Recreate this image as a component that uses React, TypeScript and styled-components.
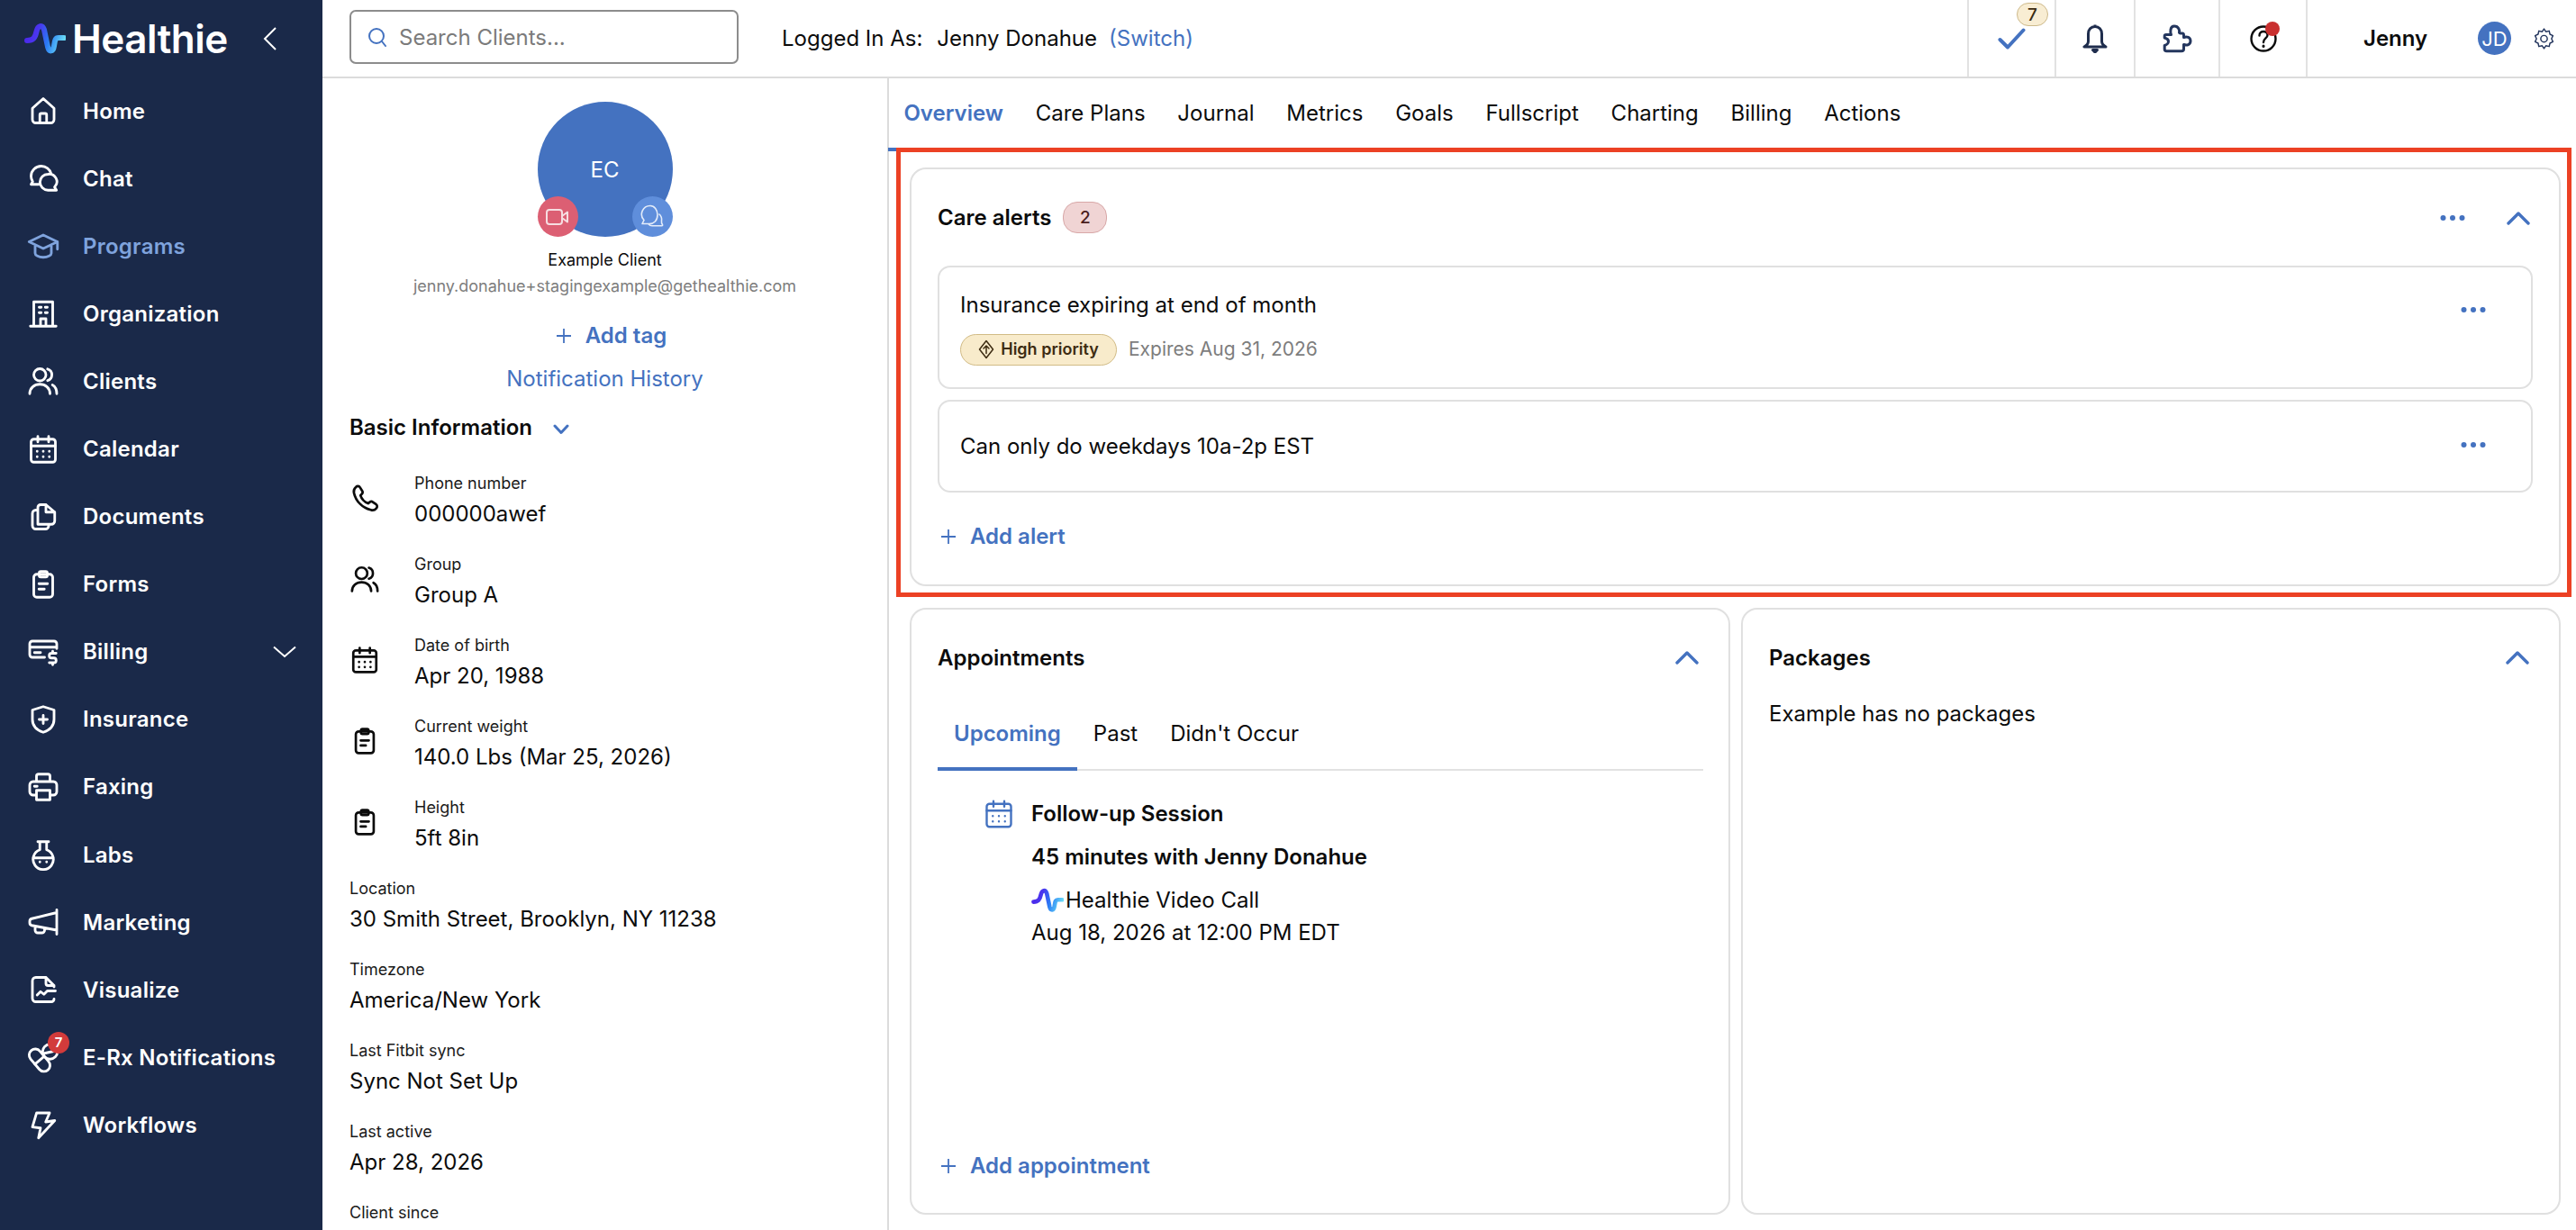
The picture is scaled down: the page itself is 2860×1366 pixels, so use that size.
import React from 'react';
import styled, { createGlobalStyle } from 'styled-components';

const BLUE = '#4472c0';
const NAVY = '#1a2949';

const GlobalStyle = createGlobalStyle`
	html, body {
		margin: 0;
		padding: 0;
		background: #fff;
		font-family: Inter, "Noto Sans", sans-serif;
		color: #0c0c0c;
	}
	* {
		box-sizing: border-box;
	}
`;

const Page = styled.div`
	display: flex;
	width: 2860px;
	height: 1366px;
	overflow: hidden;
`;

const Sidebar = styled.nav`
	width: 358px;
	flex: none;
	background: ${NAVY};
	color: #fff;
`;

const Brand = styled.div`
	height: 85.5px;
	display: flex;
	align-items: center;
	padding-left: 27px;
	position: relative;
`;

const BrandName = styled.span`
	font-size: 44px;
	font-weight: 600;
	letter-spacing: -0.5px;
	margin-left: 7px;
	line-height: 1;
`;

const Collapse = styled.svg`
	margin-left: 38px;
	width: 18px;
	height: 28px;
`;

const NavItem = styled.div<{ $active?: boolean }>`
	height: 75.1px;
	display: flex;
	align-items: center;
	padding-left: 30px;
	font-size: 24px;
	font-weight: 600;
	letter-spacing: 0.25px;
	position: relative;
	color: ${(p) => (p.$active ? '#7fa3dd' : '#fff')};
`;

const NavIcon = styled.svg`
	width: 36px;
	height: 36px;
	flex: none;
	margin-right: 26px;
	fill: none;
	stroke: currentColor;
	stroke-width: 1.9;
	stroke-linecap: round;
	stroke-linejoin: round;
`;

const NavChevron = styled.svg`
	position: absolute;
	left: 303px;
	width: 26px;
	height: 14px;
`;

const NavBadge = styled.span`
	position: absolute;
	left: 53px;
	top: 9px;
	width: 24px;
	height: 24px;
	border-radius: 50%;
	background: #d23b3b;
	color: #fff;
	font-size: 15px;
	font-weight: 600;
	letter-spacing: 0;
	display: flex;
	align-items: center;
	justify-content: center;
`;

const Main = styled.div`
	flex: 1;
	min-width: 0;
	display: flex;
	flex-direction: column;
`;

const Topbar = styled.header`
	height: 87px;
	flex: none;
	border-bottom: 2px solid #dcdcdc;
	display: flex;
	align-items: stretch;
	padding-left: 30px;
	font-size: 24px;
`;

const SearchBox = styled.div`
	width: 432px;
	height: 60px;
	margin-top: 11px;
	border: 2px solid #8c8c8c;
	border-radius: 7px;
	display: flex;
	align-items: center;
	padding-left: 19px;
	color: #7b7b7b;
	font-size: 24px;
	gap: 14px;
`;

const LoggedIn = styled.div`
	display: flex;
	align-items: center;
	margin-left: 48px;
	flex: 1;
	letter-spacing: 0;
`;

const LoggedLabel = styled.span`
	margin-right: 16px;
`;

const SwitchLink = styled.span`
	color: ${BLUE};
	margin-left: 13px;
`;

const TopCell = styled.div<{ $width: number }>`
	width: ${(p) => p.$width}px;
	flex: none;
	border-left: 2px solid #e2e2e2;
	display: flex;
	align-items: center;
	justify-content: center;
	position: relative;
	color: #1f2d4d;
`;

const CheckBadge = styled.span`
	position: absolute;
	left: 53px;
	top: 3px;
	width: 35px;
	height: 26px;
	border-radius: 13px;
	background: #f8edd3;
	border: 1px solid #cdb98a;
	color: #3c2a10;
	font-size: 19px;
	font-weight: 500;
	display: flex;
	align-items: center;
	justify-content: center;
`;

const HelpDot = styled.span`
	position: absolute;
	left: 50px;
	top: 24px;
	width: 16px;
	height: 16px;
	border-radius: 50%;
	background: #c9302f;
`;

const UserCell = styled.div`
	flex: none;
	width: 300px;
	border-left: 2px solid #e2e2e2;
	display: flex;
	align-items: center;
	padding-left: 62px;
`;

const UserName = styled.span`
	font-weight: 600;
	width: 127px;
`;

const UserAvatar = styled.div`
	width: 37px;
	height: 37px;
	border-radius: 50%;
	background: ${BLUE};
	color: #fff;
	font-size: 22px;
	display: flex;
	align-items: center;
	justify-content: center;
	margin-right: 24px;
`;

const Body = styled.div`
	flex: 1;
	min-height: 0;
	display: flex;
`;

const LeftPanel = styled.aside`
	width: 629px;
	flex: none;
	border-right: 2px solid #dcdcdc;
	padding: 26px 30px 0;
	overflow: hidden;
`;

const AvatarWrap = styled.div`
	position: relative;
	width: 150px;
	height: 150px;
	margin: 0 auto;
	border-radius: 50%;
	background: ${BLUE};
	color: #fff;
	font-size: 24px;
	display: flex;
	align-items: center;
	justify-content: center;
`;

const AvatarAction = styled.span<{ $side: 'left' | 'right'; $bg: string }>`
	position: absolute;
	bottom: 0;
	${(p) => p.$side}: 0;
	width: 45px;
	height: 45px;
	border-radius: 50%;
	background: ${(p) => p.$bg};
	display: flex;
	align-items: center;
	justify-content: center;
`;

const ClientName = styled.div`
	margin-top: 13px;
	text-align: center;
	font-size: 18px;
	line-height: 26px;
`;

const ClientEmail = styled.div`
	margin-top: 3px;
	text-align: center;
	font-size: 18px;
	line-height: 26px;
	color: #7d7d7d;
	white-space: nowrap;
`;

const AddLink = styled.div<{ $center?: boolean }>`
	display: flex;
	align-items: center;
	justify-content: ${(p) => (p.$center ? 'center' : 'flex-start')};
	color: ${BLUE};
	font-size: 24px;
	font-weight: 600;
	line-height: 36px;
`;

const AddIcon = styled.svg`
	width: 16px;
	height: 16px;
	margin: 0 16px 0 0;
	stroke: ${BLUE};
	stroke-width: 1.8;
	fill: none;
`;

const TagRow = styled(AddLink)`
	margin-top: 24px;
	padding-left: 15px;
`;

const HistoryLink = styled.div`
	margin-top: 12px;
	text-align: center;
	font-size: 24px;
	line-height: 36px;
	color: ${BLUE};
`;

const SectionToggle = styled.div`
	margin-top: 18px;
	display: flex;
	align-items: center;
	font-size: 24px;
	font-weight: 600;
	line-height: 36px;
`;

const SmallChevron = styled.svg`
	width: 18px;
	height: 12px;
	margin-left: 23px;
	margin-top: 3px;
`;

const FieldList = styled.div`
	margin-top: 29px;
`;

const Field = styled.div`
	height: 90px;
	display: flex;
`;

const FieldIcon = styled.svg`
	width: 34px;
	height: 34px;
	flex: none;
	margin: 14px 38px 0 0;
	fill: none;
	stroke: #0c0c0c;
	stroke-width: 1.9;
	stroke-linecap: round;
	stroke-linejoin: round;
`;

const FieldLabel = styled.div`
	font-size: 18px;
	line-height: 30px;
	color: #1a1a1a;
`;

const FieldValue = styled.div`
	font-size: 24px;
	line-height: 36px;
	padding-top: 1px;
`;

const Content = styled.section`
	flex: 1;
	min-width: 0;
	position: relative;
`;

const TabBar = styled.div`
	height: 81px;
	display: flex;
	margin-left: -1.5px;
`;

const PageTab = styled.div<{ $active?: boolean }>`
	padding: 0 17.9px;
	display: flex;
	align-items: center;
	font-size: 24px;
	font-weight: ${(p) => (p.$active ? 600 : 400)};
	color: ${(p) => (p.$active ? BLUE : '#0c0c0c')};
	border-bottom: 4px solid ${(p) => (p.$active ? BLUE : 'transparent')};
`;

const Cards = styled.div`
	padding: 18px 17px 0 23px;
	display: flex;
	flex-direction: column;
	gap: 24px;
`;

const Card = styled.div`
	border: 2px solid #e0e0e0;
	border-radius: 18px;
	background: #fff;
`;

const AlertsCard = styled(Card)`
	height: 465px;
	padding: 0 29px;
`;

const CardRow = styled.div`
	display: grid;
	grid-template-columns: 911px 910px;
	column-gap: 12px;
	height: 674px;
`;

const ColumnCard = styled(Card)`
	padding: 0 29px;
	display: flex;
	flex-direction: column;
`;

const CardHeader = styled.div<{ $height: number }>`
	height: ${(p) => p.$height}px;
	flex: none;
	display: flex;
	align-items: center;
`;

const CardTitle = styled.div`
	font-size: 24px;
	font-weight: 600;
`;

const CountBadge = styled.span`
	width: 49px;
	height: 35px;
	margin-left: 13px;
	border-radius: 16px;
	background: #f0d4d4;
	border: 1px solid #d8a8a8;
	color: #4a1c1c;
	font-size: 19px;
	font-weight: 500;
	display: flex;
	align-items: center;
	justify-content: center;
`;

const HeaderSpacer = styled.div`
	flex: 1;
`;

const Dots = styled.svg`
	width: 28px;
	height: 8px;
`;

const Caret = styled.svg`
	width: 26px;
	height: 16px;
	margin: 0 3px 0 46px;
`;

const CaretOnly = styled(Caret)`
	margin-left: 0;
	margin-right: 4px;
`;

const AlertStack = styled.div`
	display: flex;
	flex-direction: column;
	gap: 12px;
`;

const AlertItem = styled.div<{ $height: number }>`
	height: ${(p) => p.$height}px;
	border: 2px solid #e0e0e0;
	border-radius: 14px;
	padding: 0 50px 0 23px;
	display: flex;
	align-items: center;
`;

const AlertBody = styled.div`
	flex: 1;
	font-size: 24px;
	line-height: 36px;
`;

const AlertMeta = styled.div`
	display: flex;
	align-items: center;
	margin-top: 13px;
`;

const Priority = styled.span`
	width: 174px;
	height: 35px;
	border-radius: 18px;
	background: #f8ebcb;
	border: 1px solid #d1bb86;
	color: #3d2c12;
	font-size: 18px;
	font-weight: 600;
	display: flex;
	align-items: center;
	justify-content: center;
	gap: 7px;
`;

const Expires = styled.span`
	margin-left: 13px;
	font-size: 21px;
	color: #7d7d7d;
`;

const AlertDotsOffset = styled.div<{ $up: number }>`
	display: flex;
	margin-top: ${(p) => -p.$up}px;
`;

const AddAlertRow = styled(AddLink)`
	margin-top: 31px;
	padding-left: 4px;
`;

const SubTabs = styled.div`
	height: 73px;
	flex: none;
	border-bottom: 2px solid #e2e2e2;
	display: flex;
	align-items: stretch;
	margin-right: -1px;
`;

const SubTab = styled.div<{ $active?: boolean }>`
	padding: 0 18px 7px;
	margin-bottom: -2px;
	display: flex;
	align-items: center;
	font-size: 24px;
	font-weight: ${(p) => (p.$active ? 600 : 400)};
	color: ${(p) => (p.$active ? BLUE : '#0c0c0c')};
	border-bottom: 4px solid ${(p) => (p.$active ? BLUE : 'transparent')};
`;

const Session = styled.div`
	display: flex;
	padding: 30px 0 0 50px;
	flex: 1;
`;

const SessionIcon = styled.svg`
	width: 36px;
	height: 36px;
	flex: none;
	margin-right: 18px;
	fill: none;
	stroke: ${BLUE};
	stroke-width: 1.6;
	stroke-linecap: round;
	stroke-linejoin: round;
`;

const SessionStrong = styled.div`
	font-size: 24px;
	font-weight: 600;
	line-height: 36px;
	margin-bottom: 12px;
`;

const SessionLine = styled.div`
	font-size: 24px;
	line-height: 36px;
	display: flex;
	align-items: center;
	gap: 2px;
`;

const AddAppointment = styled(AddLink)`
	height: 36px;
	padding-left: 4px;
	margin-bottom: 34px;
`;

const PackagesNote = styled.div`
	font-size: 24px;
	line-height: 36px;
	margin-top: -8px;
`;

const Highlight = styled.div`
	position: absolute;
	left: 8px;
	top: 77px;
	width: 1860px;
	height: 499px;
	border: 5px solid #ec4124;
	pointer-events: none;
`;

const Wave: React.FC<{ width: number; height: number; id: string }> = ({ width, height, id }) => (
	<svg width={width} height={height} viewBox="0 0 46 36" fill="none" style={{ flex: 'none' }}>
		<defs>
			<linearGradient id={id} x1="0" y1="0" x2="46" y2="16" gradientUnits="userSpaceOnUse">
				<stop offset="0" stopColor="#4d1fe8" />
				<stop offset="0.35" stopColor="#4a35ee" />
				<stop offset="0.65" stopColor="#2a7cf5" />
				<stop offset="1" stopColor="#6adcf6" />
			</linearGradient>
		</defs>
		<path
			d="M3 20C10 20 12 17 13.500 10 15 3 20 2 22 8L26 27C27.500 33 32 33 33 26 34 20 34 17 38 17H44"
			stroke={`url(#${id})`}
			strokeWidth="6"
			strokeLinecap="round"
			strokeLinejoin="round"
		/>
	</svg>
);

const CLIPBOARD = (
	<>
		<rect x="5" y="4.5" width="14" height="17" rx="2.2" />
		<rect x="9" y="2.5" width="6" height="4" rx="1.2" />
		<path d="M8.8 11.5h6.4M8.8 15.5h4" />
	</>
);

const CALENDAR = (
	<>
		<rect x="3" y="4.5" width="18" height="17" rx="2" />
		<path d="M3 9.5h18M8 2.5v4M16 2.5v4" />
		<path d="M7.5 13.5h.01M12 13.5h.01M16.5 13.5h.01M7.5 17.5h.01M12 17.5h.01M16.5 17.5h.01" />
	</>
);

const USERS = (
	<>
		<circle cx="9.5" cy="7.5" r="4.5" />
		<path d="M2 21.5c0-4.3 3.4-7 7.5-7s7.5 2.7 7.5 7" />
		<path d="M15.2 3.2a4.5 4.5 0 0 1 0 8.6M18.8 15c2 1.1 3.2 3.4 3.2 6.5" />
	</>
);

interface NavEntry {
	label: string;
	icon: React.ReactNode;
	active?: boolean;
	chevron?: boolean;
	badge?: string;
}

const NAV: NavEntry[] = [
	{ label: 'Home', icon: <path d="M9.5 21v-6a1 1 0 0 1 1-1h3a1 1 0 0 1 1 1v6M4 10.2 12 3l8 7.2v8.3a2.5 2.5 0 0 1-2.5 2.5h-11A2.5 2.5 0 0 1 4 18.5z" /> },
	{
		label: 'Chat',
		icon: (
			<path d="M8.5 16.5H3l1.2-2A7.2 7.2 0 0 1 3 10.3C3 6.3 6.4 3 10.5 3c3.500 0 6.500 2.300 7.300 5.500M15.500 9a5.500 5.500 0 1 0 0 11.800h6.300l-1.400-2.300A5.600 5.600 0 0 0 15.500 9z" />
		),
	},
	{
		label: 'Programs',
		icon: <path d="M1.500 9 12 4l10.500 5L12 14zM6 11.500v6c0 1.500 2.500 3 6 3s6-1.500 6-3v-6M22.500 9v5.500" />,
		active: true,
	},
	{ label: 'Organization', icon: <path d="M2.500 21.500h19M5 21.500v-18h14v18M9 7.500h1.500M13.500 7.500H15M9 11.500h1.500M13.500 11.500H15M10 21.500v-5.500h4v5.500" /> },
	{ label: 'Clients', icon: USERS },
	{ label: 'Calendar', icon: CALENDAR },
	{
		label: 'Documents',
		icon: (
			<path d="M8 7H6.500A2.500 2.500 0 0 0 4 9.500v9A2.500 2.500 0 0 0 6.500 21h7a2.500 2.500 0 0 0 2.500-2v-1M8 17.500V5a2 2 0 0 1 2-2h4l6.500 5.500V15a2.500 2.500 0 0 1-2.500 2.500zM14 3v5.500h6.500" />
		),
	},
	{ label: 'Forms', icon: CLIPBOARD },
	{
		label: 'Billing',
		icon: (
			<path d="M22 9.500V6a2 2 0 0 0-2-2H4a2 2 0 0 0-2 2v8a2 2 0 0 0 2 2h9M2 8.500h20M5.500 12.500H10M21.500 13h-3.300a1.700 1.700 0 0 0 0 3.500h1.600a1.700 1.700 0 0 1 0 3.500h-3.300M19 11.500v1.500M19 20v1.500" />
		),
		chevron: true,
	},
	{ label: 'Insurance', icon: <path d="M12 2.500 20 5v7c0 5-3.500 8-8 9.500C7.500 20 4 17 4 12V5zM12 9v6M9 12h6" /> },
	{
		label: 'Faxing',
		icon: (
			<path d="M7 8V4a1.500 1.500 0 0 1 1.500-1.500h7A1.500 1.500 0 0 1 17 4v4M7 18H4.500A2.500 2.500 0 0 1 2 15.500v-5A2.500 2.500 0 0 1 4.500 8h15a2.500 2.500 0 0 1 2.500 2.500v5a2.500 2.500 0 0 1-2.500 2.500H17M7 14.500h10V21.500H7zM5.500 11.500h2" />
		),
	},
	{
		label: 'Labs',
		icon: <path d="M8 2.500h8M9.500 2.500v6a7.500 7.500 0 1 0 5 0v-6M4.500 14.500h15M9.500 17.500h.01M14.500 17.500h.01" />,
	},
	{
		label: 'Marketing',
		icon: (
			<path d="M22 3v18M22 5 3.500 9.500A2 2 0 0 0 2 11.500v1a2 2 0 0 0 1.500 2L22 18M6 15.500v2.500a2 2 0 0 0 2 2h3a2 2 0 0 0 2-2v-1" />
		),
	},
	{
		label: 'Visualize',
		icon: (
			<path d="M20 10V9l-6-6H6.500A2.500 2.500 0 0 0 4 5.500v13A2.500 2.500 0 0 0 6.500 21H18a2 2 0 0 0 2-2M14 3v4.500a1.500 1.500 0 0 0 1.500 1.500H20M7.500 16l2.500-2.500 2.500 2 2.500-2.500H21" />
		),
	},
	{
		label: 'E-Rx Notifications',
		icon: (
			<>
				<g transform="translate(9.3 14.3) rotate(50)">
					<rect x="-9.500" y="-4.500" width="19" height="9" rx="4.500" />
					<path d="M0-4.500v9" />
				</g>
				<circle cx="17" cy="8" r="5.500" />
				<path d="M11.500 9.500l11-2.500" />
			</>
		),
		badge: '7',
	},
	{ label: 'Workflows', icon: <path d="M7.100 3.300h9.600L13.800 10l6.700-1L8.500 21.800 10 14.500l-6-.7z" /> },
];

const TABS = ['Overview', 'Care Plans', 'Journal', 'Metrics', 'Goals', 'Fullscript', 'Charting', 'Billing', 'Actions'];

const ICON_FIELDS: { label: string; value: string; icon: React.ReactNode }[] = [
	{
		label: 'Phone number',
		value: '000000awef',
		icon: (
			<path d="M5 3.500c1-1 2.500-1 3.300.3l1.700 2.700c.5.800.3 1.800-.4 2.500l-1 1c.8 2.500 3.200 5.200 6 6.300l1.300-1c.7-.500 1.700-.6 2.400-.1l2.400 1.700c1.200.8 1.300 2.300.3 3.300-1 1.200-2.700 1.800-4.300 1.200C10 19.500 5 14.500 3.500 8c-.4-1.700.3-3.400 1.500-4.500z" />
		),
	},
	{ label: 'Group', value: 'Group A', icon: USERS },
	{ label: 'Date of birth', value: 'Apr 20, 1988', icon: CALENDAR },
	{ label: 'Current weight', value: '140.0 Lbs (Mar 25, 2026)', icon: CLIPBOARD },
	{ label: 'Height', value: '5ft 8in', icon: CLIPBOARD },
];

const PLAIN_FIELDS = [
	{ label: 'Location', value: '30 Smith Street, Brooklyn, NY 11238' },
	{ label: 'Timezone', value: 'America/New York' },
	{ label: 'Last Fitbit sync', value: 'Sync Not Set Up' },
	{ label: 'Last active', value: 'Apr 28, 2026' },
	{ label: 'Client since', value: '' },
];

const DotsIcon = () => (
	<Dots viewBox="0 0 28 8" fill={BLUE}>
		<circle cx="3.500" cy="4" r="3" />
		<circle cx="14" cy="4" r="3" />
		<circle cx="24.500" cy="4" r="3" />
	</Dots>
);

const CaretPath = () => <path d="M2 14 13 3l11 11" stroke={BLUE} strokeWidth="3.400" fill="none" strokeLinecap="round" strokeLinejoin="round" />;

const Plus = () => (
	<AddIcon viewBox="0 0 16 16">
		<path d="M8 0v16M0 8h16" />
	</AddIcon>
);

const App: React.FC = () => {
	return (
		<Page>
			<GlobalStyle />
			<Sidebar>
				<Brand>
					<Wave width={46} height={36} id="brand-wave" />
					<BrandName>Healthie</BrandName>
					<Collapse viewBox="0 0 18 28" fill="none" stroke="#fff" strokeWidth="2">
						<path d="M15 2 3 14l12 12" />
					</Collapse>
				</Brand>
				{NAV.map((item) => (
					<NavItem key={item.label} $active={item.active}>
						<NavIcon viewBox="0 0 24 24">{item.icon}</NavIcon>
						{item.label}
						{item.badge && <NavBadge>{item.badge}</NavBadge>}
						{item.chevron && (
							<NavChevron viewBox="0 0 26 14" fill="none" stroke="#fff" strokeWidth="2">
								<path d="M1 1.500 13 12 25 1.500" />
							</NavChevron>
						)}
					</NavItem>
				))}
			</Sidebar>
			<Main>
				<Topbar>
					<SearchBox>
						<svg width="20" height="22" viewBox="0 0 20 22" fill="none" stroke={BLUE} strokeWidth="2">
							<circle cx="9" cy="10" r="8" />
							<path d="M15 16l4 5" strokeLinecap="round" />
						</svg>
						Search Clients...
					</SearchBox>
					<LoggedIn>
						<LoggedLabel>Logged In As:</LoggedLabel>
						Jenny Donahue
						<SwitchLink>(Switch)</SwitchLink>
					</LoggedIn>
					<TopCell $width={97}>
						<svg width="31" height="24" viewBox="0 0 31 24" fill="none" stroke={BLUE} strokeWidth="4" strokeLinecap="round" strokeLinejoin="round">
							<path d="M2.500 13 11 21.500 28.500 2.500" />
						</svg>
						<CheckBadge>7</CheckBadge>
					</TopCell>
					<TopCell $width={88}>
						<svg width="28" height="33" viewBox="0 0 28 33" fill="none" stroke="#1f2d4d" strokeWidth="3" strokeLinejoin="round">
							<path d="M14 1.500v2M14 3.500c-4.500 0-7.500 3.500-7.500 8V20c0 3-2 4.500-4.500 6h24c-2.500-1.500-4.500-3-4.500-6v-8.500c0-4.500-3-8-7.500-8z" />
							<path d="M11.500 29.500h5l-2.500 2.500z" fill="#1f2d4d" />
						</svg>
					</TopCell>
					<TopCell $width={94}>
						<svg width="34" height="34" viewBox="0 0 34 34" fill="none" stroke="#24365e" strokeWidth="3" strokeLinejoin="round">
							<path d="M5 12.500H10.500C9.500 10 9 3 14 3 19 3 20 8 19.500 9.500 19.200 10.500 20 11 21 11H23C24 11 24.500 11.800 24.500 13V15.500C28 14 32 15.500 32 19.500 32 23.500 28 25 24.500 23.500V28.500C24.500 30 23.500 30.800 22 30.800H5.500C4 30.800 3.200 30 3.200 28.500V24.500C5.500 24 7.500 22 7.500 20 7.500 18 5 16.500 3.200 16V14C3.200 13 3.800 12.500 5 12.500Z" />
						</svg>
					</TopCell>
					<TopCell $width={97}>
						<svg width="30" height="30" viewBox="0 0 30 30" fill="none" stroke="#0c0c0c" strokeWidth="2.400">
							<circle cx="15" cy="15" r="13.500" />
							<path d="M10.500 11.500c0-3 2-4.500 4.500-4.500s4.500 1.500 4.500 4c0 3.500-4.500 3.500-4.500 8" strokeLinecap="round" />
							<path d="M15 23v.5" strokeLinecap="round" strokeWidth="3" />
						</svg>
						<HelpDot />
					</TopCell>
					<UserCell>
						<UserName>Jenny</UserName>
						<UserAvatar>JD</UserAvatar>
						<svg width="25" height="26" viewBox="0 0 24 24" fill="none" stroke="#24365e" strokeWidth="1.400" strokeLinejoin="round">
							<circle cx="12" cy="12" r="3.500" />
							<path d="M12 1.500l2 3 3.500-.8.800 3.500 3.200 1.600-1.500 3.200 1.500 3.200-3.200 1.600-.8 3.500-3.500-.8-2 3-2-3-3.500.8-.8-3.500-3.200-1.600 1.500-3.200-1.500-3.200 3.200-1.600.8-3.500 3.500.8z" />
						</svg>
					</UserCell>
				</Topbar>
				<Body>
					<LeftPanel>
						<AvatarWrap>
							EC
							<AvatarAction $side="left" $bg="#dc5f73">
								<svg width="26" height="20" viewBox="0 0 26 20" fill="none" stroke="#f6dde1" strokeWidth="2" strokeLinejoin="round">
									<rect x="1" y="2" width="17" height="16" rx="3" />
									<path d="M18 9l6-4.500v11L18 11z" />
								</svg>
							</AvatarAction>
							<AvatarAction $side="right" $bg="#5f8edb">
								<svg width="26" height="28" viewBox="0 0 26 28" fill="none" stroke="#e3ecfa" strokeWidth="1.600" strokeLinejoin="round">
									<path d="M11 1.500a9.500 9.500 0 0 0-7 16L2 21.500h8c5 0 9-3.500 9-10 0-5.500-3.500-10-8-10z" />
									<path d="M20.500 10.500c2.500 2 3.500 5 3 8-.2 1.200 0 2.500 1 4 .3.600 0 1.200-.6 1.200H13c-1.500 0-3-.6-4-2" />
								</svg>
							</AvatarAction>
						</AvatarWrap>
						<ClientName>Example Client</ClientName>
						<ClientEmail>jenny.donahue+stagingexample@gethealthie.com</ClientEmail>
						<TagRow $center>
							<Plus />
							Add tag
						</TagRow>
						<HistoryLink>Notification History</HistoryLink>
						<SectionToggle>
							Basic Information
							<SmallChevron viewBox="0 0 18 12" fill="none" stroke={BLUE} strokeWidth="3" strokeLinecap="round" strokeLinejoin="round">
								<path d="M2 2l7 7.500L16 2" />
							</SmallChevron>
						</SectionToggle>
						<FieldList>
							{ICON_FIELDS.map((field) => (
								<Field key={field.label}>
									<FieldIcon viewBox="0 0 24 24">{field.icon}</FieldIcon>
									<div>
										<FieldLabel>{field.label}</FieldLabel>
										<FieldValue>{field.value}</FieldValue>
									</div>
								</Field>
							))}
							{PLAIN_FIELDS.map((field) => (
								<Field key={field.label}>
									<div>
										<FieldLabel>{field.label}</FieldLabel>
										<FieldValue>{field.value}</FieldValue>
									</div>
								</Field>
							))}
						</FieldList>
					</LeftPanel>
					<Content>
						<TabBar>
							{TABS.map((tab, i) => (
								<PageTab key={tab} $active={i === 0}>
									{tab}
								</PageTab>
							))}
						</TabBar>
						<Cards>
							<AlertsCard>
								<CardHeader $height={107}>
									<CardTitle>Care alerts</CardTitle>
									<CountBadge>2</CountBadge>
									<HeaderSpacer />
									<DotsIcon />
									<Caret viewBox="0 0 26 16">
										<CaretPath />
									</Caret>
								</CardHeader>
								<AlertStack>
									<AlertItem $height={137}>
										<AlertBody>
											Insurance expiring at end of month
											<AlertMeta>
												<Priority>
													<svg width="18" height="22" viewBox="0 0 18 22" fill="none" stroke="#3d2c12" strokeWidth="1.500" strokeLinejoin="round">
														<path d="M9 1.500 16.500 11 9 20.500 1.500 11z" />
														<path d="M9 15.500v-8M6 10l3-3 3 3" strokeLinecap="round" />
													</svg>
													High priority
												</Priority>
												<Expires>Expires Aug 31, 2026</Expires>
											</AlertMeta>
										</AlertBody>
										<AlertDotsOffset $up={40}>
											<DotsIcon />
										</AlertDotsOffset>
									</AlertItem>
									<AlertItem $height={103}>
										<AlertBody>Can only do weekdays 10a-2p EST</AlertBody>
										<AlertDotsOffset $up={4}>
											<DotsIcon />
										</AlertDotsOffset>
									</AlertItem>
								</AlertStack>
								<AddAlertRow>
									<Plus />
									Add alert
								</AddAlertRow>
							</AlertsCard>
							<CardRow>
								<ColumnCard>
									<CardHeader $height={106}>
										<CardTitle>Appointments</CardTitle>
										<HeaderSpacer />
										<CaretOnly viewBox="0 0 26 16">
											<CaretPath />
										</CaretOnly>
									</CardHeader>
									<SubTabs>
										<SubTab $active>Upcoming</SubTab>
										<SubTab>Past</SubTab>
										<SubTab>Didn't Occur</SubTab>
									</SubTabs>
									<Session>
										<SessionIcon viewBox="0 0 24 24">{CALENDAR}</SessionIcon>
										<div>
											<SessionStrong>Follow-up Session</SessionStrong>
											<SessionStrong>45 minutes with Jenny Donahue</SessionStrong>
											<SessionLine>
												<Wave width={36} height={28} id="video-wave" />
												<span>Healthie Video Call</span>
											</SessionLine>
											<SessionLine>Aug 18, 2026 at 12:00 PM EDT</SessionLine>
										</div>
									</Session>
									<AddAppointment>
										<Plus />
										Add appointment
									</AddAppointment>
								</ColumnCard>
								<ColumnCard>
									<CardHeader $height={106}>
										<CardTitle>Packages</CardTitle>
										<HeaderSpacer />
										<CaretOnly viewBox="0 0 26 16">
											<CaretPath />
										</CaretOnly>
									</CardHeader>
									<PackagesNote>Example has no packages</PackagesNote>
								</ColumnCard>
							</CardRow>
						</Cards>
						<Highlight />
					</Content>
				</Body>
			</Main>
		</Page>
	);
};

export default App;
